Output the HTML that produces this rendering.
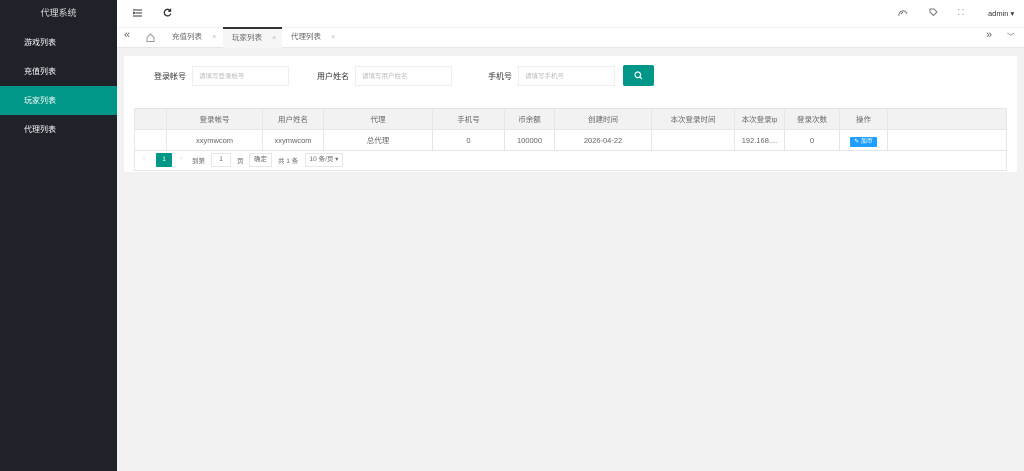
<!DOCTYPE html>
<html><head><meta charset="utf-8"><style>
*{margin:0;padding:0;box-sizing:border-box}
body{width:1024px;height:471px;overflow:hidden;background:#f2f2f2;font-family:"Liberation Sans","Noto Sans CJK SC",sans-serif;font-size:8px;color:#555;position:relative}
.side{position:absolute;left:0;top:0;width:117px;height:471px;background:#20222a}
.logo{height:27px;line-height:27px;text-align:center;color:#ddd;font-size:9px}
.mi{height:29px;line-height:29px;padding-left:24px;color:#fff;font-size:8px}
.mi.on{background:#009688}
.head{position:absolute;left:117px;top:0;right:0;height:27px;background:#fff}
.tabs{position:absolute;left:117px;top:27px;right:0;height:21px;background:#fff;border-bottom:1px solid #e6e6e6;border-top:1px solid #f0f0f0}
.tab{position:absolute;top:-1px;height:21px;line-height:20px;color:#666;font-size:7.5px}
.tab i{font-style:normal;color:#bbb;margin-left:10px}
.card{position:absolute;left:124px;top:56px;width:893px;height:116px;background:#fff}
.lab{position:absolute;top:66px;font-size:8px;color:#333}
.inp{position:absolute;top:66px;height:20px;width:97px;border:1px solid #eee;color:#bbb;font-size:6.5px;padding:6px 6px;line-height:7px}
.btn{position:absolute;left:623px;top:65px;width:31px;height:21px;background:#009688;border-radius:2px}
table{position:absolute;left:134px;top:108px;width:873px;border-collapse:collapse;font-size:7.5px;table-layout:fixed}
td{border:1px solid #e6e6e6;text-align:center;height:21px;color:#666}
tr.h td{background:#f2f2f2;color:#666}
.pg{position:absolute;left:134px;top:150px;width:873px;height:21px;border:1px solid #e6e6e6;border-top:none;font-size:6.5px;color:#666}
.pg span{position:absolute;top:5px}
</style></head><body>
<div class="side">
<div class="logo">代理系统</div>
<div class="mi" style="margin-top:1px">游戏列表</div>
<div class="mi">充值列表</div>
<div class="mi on">玩家列表</div>
<div class="mi">代理列表</div>
</div>
<div class="head">
<svg style="position:absolute;left:16px;top:9px" width="9" height="8" viewBox="0 0 9 8"><path d="M0 1h9M3 4h6M0 7h9M0 3l2 1-2 1" stroke="#333" fill="none" stroke-width="1"/></svg>
<svg style="position:absolute;left:46px;top:8px" width="9" height="9" viewBox="0 0 9 9"><path d="M7.5 3A3.3 3.3 0 1 0 7.8 5.5M7.5 0.8V3.2H5.2" stroke="#333" fill="none" stroke-width="1.3"/></svg>
<svg style="position:absolute;left:781px;top:9px" width="10" height="8" viewBox="0 0 10 8"><path d="M1 7A4 4 0 0 1 9 5M3 5l2-2" stroke="#777" fill="none"/></svg>
<svg style="position:absolute;left:812px;top:8px" width="9" height="9" viewBox="0 0 9 9"><path d="M1 1h4l3 3-3.5 3.5L1 4z" stroke="#777" fill="none"/></svg>
<div style="position:absolute;left:841px;top:8px;color:#999;font-size:8px">⛶</div>
<div style="position:absolute;left:871px;top:9px;color:#333;font-size:7.5px">admin ▾</div>
</div>
<div class="tabs">
<div class="tab" style="left:7px;font-size:11px;top:-3px;color:#666">«</div>
<svg style="position:absolute;left:29px;top:5px" width="9" height="9" viewBox="0 0 9 9"><path d="M1 4.5L4.5 1 8 4.5V8.5H1z" stroke="#999" fill="none"/></svg>
<div class="tab" style="left:55px">充值列表<i>×</i></div>
<div class="tab" style="left:106px;width:59px;padding-left:9px;background:#f6f6f6;border-top:2px solid #333;line-height:18px">玩家列表<i>×</i></div>
<div class="tab" style="left:174px">代理列表<i>×</i></div>
<div class="tab" style="left:869px;font-size:11px;top:-3px">»</div>
<div class="tab" style="left:890px;color:#666">﹀</div>
</div>
<div class="card"></div>
<div class="lab" style="left:154px;top:71px">登录帐号</div>
<div class="inp" style="left:192px">请填写登录帐号</div>
<div class="lab" style="left:317px;top:71px">用户姓名</div>
<div class="inp" style="left:355px">请填写用户姓名</div>
<div class="lab" style="left:488px;top:71px">手机号</div>
<div class="inp" style="left:518px">请填写手机号</div>
<div class="btn"><svg style="position:absolute;left:11px;top:6px" width="9" height="9" viewBox="0 0 9 9"><circle cx="3.8" cy="3.8" r="2.8" stroke="#fff" fill="none" stroke-width="1.2"/><path d="M6 6l2 2" stroke="#fff" stroke-width="1.2"/></svg></div>
<table>
<colgroup><col style="width:32px"><col style="width:96px"><col style="width:61px"><col style="width:109px"><col style="width:72px"><col style="width:50px"><col style="width:97px"><col style="width:83px"><col style="width:50px"><col style="width:55px"><col style="width:48px"><col></colgroup>
<tr class="h"><td></td><td>登录帐号</td><td>用户姓名</td><td>代理</td><td>手机号</td><td>币余额</td><td>创建时间</td><td>本次登录时间</td><td>本次登录ip</td><td>登录次数</td><td>操作</td><td></td></tr>
<tr><td></td><td>xxymwcom</td><td>xxymwcom</td><td>总代理</td><td>0</td><td>100000</td><td>2026-04-22</td><td></td><td>192.168....</td><td>0</td><td><span style="background:#1e9fff;color:#fff;font-size:6px;padding:2px 4px;border-radius:1px">✎ 加币</span></td><td></td></tr>
</table>
<div class="pg">
<span style="left:8px;color:#ccc">‹</span>
<span style="left:21px;top:3px;width:16px;height:14px;background:#009688;color:#fff;text-align:center;line-height:14px">1</span>
<span style="left:45px;color:#ccc">›</span>
<span style="left:57px">到第</span>
<span style="left:76px;top:3px;width:20px;height:14px;border:1px solid #e6e6e6;text-align:center;line-height:12px">1</span>
<span style="left:102px">页</span>
<span style="left:114px;top:3px;width:23px;height:14px;border:1px solid #e6e6e6;text-align:center;line-height:12px">确定</span>
<span style="left:143px">共 1 条</span>
<span style="left:170px;top:3px;width:38px;height:14px;border:1px solid #e6e6e6;text-align:center;line-height:12px">10 条/页 ▾</span>
</div>
</body></html>
